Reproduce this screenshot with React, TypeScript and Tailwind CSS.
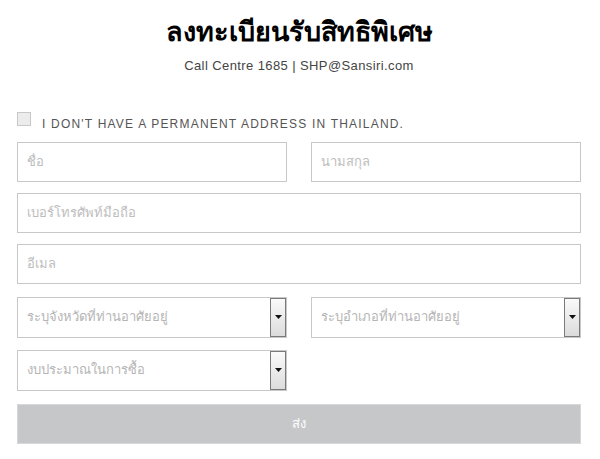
import React from 'react';

const Field = ({ placeholder }: { placeholder: string }) => (
  <div className="h-[40px] border border-[#c8c8c8] bg-white flex items-center px-[9px] text-[13px] text-[#bdbdbd]">
    {placeholder}
  </div>
);

const Select = ({ placeholder }: { placeholder: string }) => (
  <div className="h-[41px] border border-[#c8c8c8] bg-white flex items-center">
    <span className="flex-1 px-[9px] text-[13px] text-[#b5b5b5]">{placeholder}</span>
    <div className="w-[16px] h-full border border-[#7a7a7a] bg-gradient-to-b from-[#fafafa] to-[#dcdcdc] flex items-center justify-center">
      <svg width="7" height="4" viewBox="0 0 7 4">
        <path d="M0 0 L7 0 L3.5 4 Z" fill="#111" />
      </svg>
    </div>
  </div>
);

export default function App() {
  return (
    <div className="w-[600px] h-[459px] bg-white font-['Liberation_Sans',sans-serif] pl-[17px] pr-[19px] pt-[14px]">
      <div className="text-center">
        <h1 className="text-[27px] font-bold leading-[36px] text-black font-['Liberation_Serif',serif]">ลงทะเบียนรับสิทธิพิเศษ</h1>
        <p className="text-[13px] tracking-[0.4px] text-[#444] mt-[6px]">Call Centre 1685 | SHP@Sansiri.com</p>
      </div>

      <label className="flex items-start gap-[11px] mt-[36px]">
        <span className="w-[14px] h-[14px] border border-[#c8c8c8] bg-[#ececec]" />
        <span className="text-[12px] text-[#555] tracking-[1.2px] mt-[3px]">I DON'T HAVE A PERMANENT ADDRESS IN THAILAND.</span>
      </label>

      <div className="grid grid-cols-2 gap-x-[24px] mt-[9px]">
        <Field placeholder="ชื่อ" />
        <Field placeholder="นามสกุล" />
      </div>
      <div className="mt-[11px]">
        <Field placeholder="เบอร์โทรศัพท์มือถือ" />
      </div>
      <div className="mt-[11px]">
        <Field placeholder="อีเมล" />
      </div>
      <div className="grid grid-cols-2 gap-x-[24px] mt-[13px]">
        <Select placeholder="ระบุจังหวัดที่ท่านอาศัยอยู่" />
        <Select placeholder="ระบุอำเภอที่ท่านอาศัยอยู่" />
      </div>
      <div className="grid grid-cols-2 gap-x-[24px] mt-[12px]">
        <Select placeholder="งบประมาณในการซื้อ" />
      </div>
      <button className="w-full h-[40px] mt-[13px] bg-[#c6c7c9] border border-[#d8d8d8] text-white text-[13px]">ส่ง</button>
    </div>
  );
}
